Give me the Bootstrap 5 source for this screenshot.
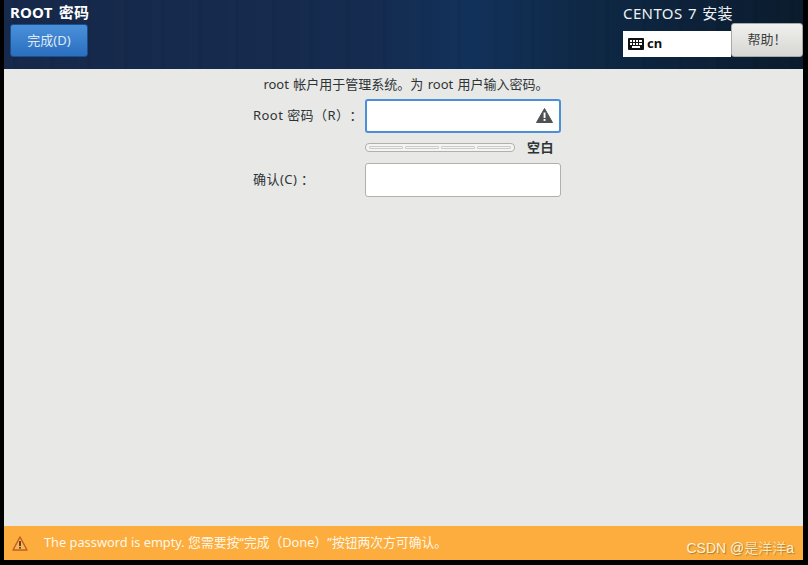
<!DOCTYPE html>
<html lang="zh-CN">
<head>
  <meta charset="UTF-8">
  <meta name="viewport" content="width=device-width, initial-scale=1.0">
  <title>ROOT 密码</title>
  <link href="https://cdn.jsdelivr.net/npm/bootstrap@5.3.0/dist/css/bootstrap.min.css" rel="stylesheet">
  <style>
    html, body { height: 100%; margin: 0; }
    body {
      background: #000;
      font-family: "Noto Sans", "Noto Sans CJK SC", sans-serif;
      font-size: 13px;
      color: #2e3436;
      overflow: hidden;
      text-spacing-trim: space-all;
    }
    .frame { width: 799px; height: 560px; margin-left: 4px; background: #e8e8e6; }
    .top-bar {
      height: 69px;
      padding-left: 6px;
      background:
        repeating-linear-gradient(90deg, rgba(255,255,255,.008) 0 9px, rgba(0,0,0,.02) 9px 13px, rgba(255,255,255,.005) 13px 37px),
        linear-gradient(90deg, #15284a 0%, #142a4e 45%, #11305a 58%, #0d2744 73%, #0a1a2c 100%);
    }
    .spoke-title { font-size: 15px; font-weight: 700; word-spacing: 2px; letter-spacing: .2px; color: #fff; line-height: 16px; padding-top: 4px; margin-bottom: 4px; }
    .done-btn {
      display: block;
      width: 78px; height: 33px; padding: 0;
      font-size: 13px; color: #dfe9f6;
      background: linear-gradient(#4a90d9, #2a6fc0);
      border: 1px solid #1c4f8d; border-radius: 3px;
    }
    .side-info { width: 180px; }
    .product-name { font-size: 15px; word-spacing: 1px; letter-spacing: .4px; color: #eef1f4; line-height: 16px; padding-top: 5px; height: 31px; }
    .kbd-box {
      width: 108px; height: 26px; background: #fff; color: #111;
      font-size: 13px; font-weight: 700; padding-left: 5px; gap: 3px;
    }
    .help-btn {
      width: 72px; height: 34px; padding: 0; margin-top: -8px;
      font-size: 13px; color: #3a3f41;
      background: linear-gradient(#f0f0ee, #d6d6d3);
      border: 1px solid #a8a8a4; border-radius: 3px;
    }
    .main-area { height: 457px; }
    .intro-line { text-align: center; line-height: 16px; padding: 7px 0 0 5px; margin: 0 0 7px; word-spacing: 1px; }
    .pw-row { margin-left: 249px; }
    .pw-label { width: 112px; flex: none; letter-spacing: .45px; }
    .pw-input {
      width: 196px; height: 34px; padding: 0 24px 0 8px;
      background: #fff; border: 1px solid #b0b0ac; border-radius: 3px; box-shadow: none;
    }
    .pw-input.active-field { border: 2px solid #4a90d9; }
    .warn-icon { position: absolute; right: 8px; top: 9px; }
    .meter-row { margin-top: 10px; margin-bottom: 11px; height: 9px; }
    .meter-track {
      width: 150px; height: 9px; padding: 2px 3px; gap: 2px;
      background: #f4f4f2; border: 1px solid #b0b0ac; border-radius: 4px;
    }
    .meter-track span { flex: 1; border: 1px solid #cbcbc7; border-radius: 1px; }
    .meter-word { font-weight: 700; font-size: 13px; letter-spacing: .5px; margin-left: 12px; line-height: 9px; }
    .warn-bar { height: 34px; background: #fcad3d; color: #fff7e8; padding: 0 9px 0 8px; }
    .warn-text { margin-left: 16px; font-size: 12.8px; }
    .csdn-mark { font-size: 14px; font-family: "Liberation Sans", "Noto Sans CJK SC", sans-serif; font-weight: 300; color: #fff3d6; text-shadow: 1px 1px 1px #a87a30; margin-top: 10px; }
  </style>
</head>
<body>

  <div class="frame d-flex flex-column">
    <!-- header -->
    <div class="top-bar d-flex justify-content-between">
      <div>
        <div class="spoke-title">ROOT 密码</div>
        <button type="button" class="btn done-btn">完成(D)</button>
      </div>
      <div class="side-info">
        <div class="product-name">CENTOS 7 安装</div>
        <div class="d-flex">
          <div class="kbd-box d-flex align-items-center">
            <svg width="16" height="12" viewBox="0 0 16 12"><rect width="16" height="12" rx="1" fill="#111"/><g fill="#fff"><rect x="2" y="2" width="2" height="2"/><rect x="5" y="2" width="2" height="2"/><rect x="8" y="2" width="2" height="2"/><rect x="11" y="2" width="3" height="2"/><rect x="2" y="5" width="2" height="2"/><rect x="5" y="5" width="2" height="2"/><rect x="8" y="5" width="2" height="2"/><rect x="11" y="5" width="3" height="2"/><rect x="4" y="8" width="8" height="2"/></g></svg>
            <span>cn</span>
          </div>
          <button type="button" class="btn help-btn">帮助！</button>
        </div>
      </div>
    </div>

    <!-- form -->
    <div class="main-area">
      <p class="intro-line">root 帐户用于管理系统。为 root 用户输入密码。</p>
      <div class="pw-row d-flex align-items-center">
        <label class="pw-label" for="pw1">Root 密码（R）：</label>
        <div class="position-relative">
          <input id="pw1" type="password" class="form-control pw-input active-field">
          <svg class="warn-icon" width="17" height="15" viewBox="0 0 17 15"><path d="M8.5 0.5 L16.5 14.5 H0.5 Z" fill="#4d5254" stroke="#4d5254" stroke-linejoin="round"/><rect x="7.6" y="4.5" width="1.9" height="5.5" fill="#fff"/><rect x="7.6" y="11" width="1.9" height="1.9" fill="#fff"/></svg>
        </div>
      </div>
      <div class="pw-row d-flex align-items-center meter-row">
        <div class="pw-label"></div>
        <div class="meter-track d-flex"><span></span><span></span><span></span><span></span></div>
        <div class="meter-word">空白</div>
      </div>
      <div class="pw-row d-flex align-items-center">
        <label class="pw-label" for="pw2">确认(C) ：</label>
        <input id="pw2" type="password" class="form-control pw-input">
      </div>
    </div>

    <!-- warning bar -->
    <div class="warn-bar d-flex align-items-center">
      <svg width="16" height="15" viewBox="0 0 16 15"><path d="M8 1 L15 14 H1 Z" fill="#f9b45a" stroke="#c4601a" stroke-width="1.5" stroke-linejoin="round"/><rect x="7.2" y="5" width="1.6" height="5" fill="#3a2a1a"/><rect x="7.2" y="11" width="1.6" height="1.6" fill="#3a2a1a"/></svg>
      <span class="warn-text">The password is empty. 您需要按“完成（Done）”按钮两次方可确认。</span>
      <span class="csdn-mark ms-auto">CSDN @是洋洋a</span>
    </div>
  </div>

</body>
</html>
